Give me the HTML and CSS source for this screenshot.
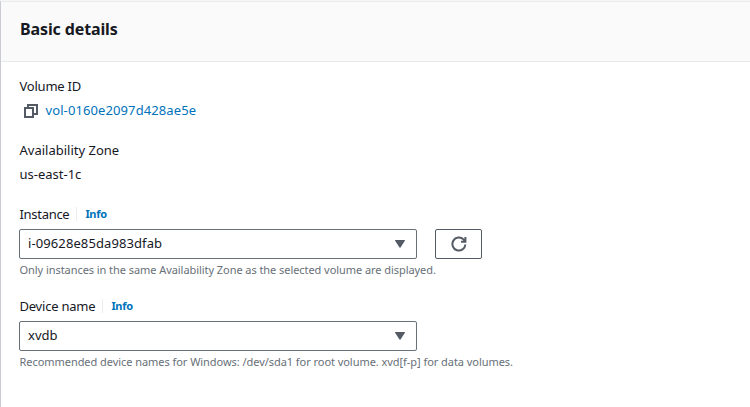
FILE: index.html
```html
<!DOCTYPE html>
<html lang="en">
<head>
<meta charset="utf-8">
<title>Attach volume</title>
<link rel="stylesheet" href="styles.css">
</head>
<body>
<section class="panel">
  <header class="panel-header"><h2>Basic details</h2></header>
  <div class="panel-body">
    <div class="field">
      <div class="label"><span class="t-volume">Volume ID</span></div>
      <div class="value">
        <svg class="copy" width="14" height="14" viewBox="0 0 14 14"><path d="M1 4h8v9H1zM4 4V1h9v9H9"/></svg>
        <a class="t-id">vol-0160e2097d428ae5e</a>
      </div>
    </div>
    <div class="field">
      <div class="label"><span>Availability Zone</span></div>
      <div class="value"><span>us-east-1c</span></div>
    </div>
    <div class="field field-instance">
      <div class="label"><span class="t-name">Instance</span><a class="info">Info</a></div>
      <div class="controls">
        <div class="select"><span class="t-id">i-09628e85da983dfab</span><svg width="10" height="8" viewBox="0 0 10 8"><path d="M.5 0h9q.7 0 .4.7L5.5 7.5q-.5.7-1 0L.1.7Q-.2 0 .5 0z"/></svg></div>
        <button class="refresh" aria-label="Refresh"><svg width="16" height="16" viewBox="0 0 16 16"><path d="M14.4 8.5A6.5 6.5 0 1 1 12.5 3.4L14.5 5.2M14.4 1v4.7H10"/></svg></button>
      </div>
      <div class="hint">Only instances in the same Availability Zone as the selected volume are displayed.</div>
    </div>
    <div class="field">
      <div class="label"><span class="t-device">Device name</span><a class="info">Info</a></div>
      <div class="controls"><div class="select"><span>xvdb</span><svg width="10" height="8" viewBox="0 0 10 8"><path d="M.5 0h9q.7 0 .4.7L5.5 7.5q-.5.7-1 0L.1.7Q-.2 0 .5 0z"/></svg></div></div>
      <div class="hint hint-device">Recommended device names for Windows: /dev/sda1 for root volume. xvd[f-p] for data volumes.</div>
    </div>
  </div>
</section>
</body>
</html>
```
FILE: styles.css
```css
* { box-sizing: border-box; }
body { margin: 0; padding-top: 1px; background: #f5f5f5; color: #16191f; font: 13px/20px "Noto Sans", "Open Sans", sans-serif; }
.panel { height: 406px; background: #fff; border-top: 1px solid #eaeded; border-left: 1px solid #c9cdd2; }
.panel-header { height: 60px; padding: 17px 18px 0 19px; background: #fafafa; border-bottom: 1px solid #e6eaea; }
h2 { margin: 0; font-size: 16px; line-height: 20px; font-weight: 700; letter-spacing: -0.12px; }
.panel-body { padding: 14px 18px; }
.field { height: 64px; }
.field-instance { height: 92px; }
.label { display: flex; align-items: center; height: 20px; padding-left: .5px; }
.value { display: flex; align-items: center; height: 20px; margin-top: 4px; padding-left: .5px; }
span, a, .hint { white-space: nowrap; }
a { color: #0073bb; }
.t-volume { letter-spacing: -0.22px; }
.t-id { letter-spacing: 0.1px; }
.t-name { letter-spacing: -0.3px; }
.t-device { letter-spacing: -0.22px; }
.copy { margin: 1px 7.5px 0 4.5px; fill: none; stroke: #545b64; stroke-width: 2; }
.info { margin-left: 7px; padding-left: 8px; border-left: 1px solid #eaeded; font-size: 11px; line-height: 14px; font-weight: 700; letter-spacing: -0.3px; }
.controls { display: flex; gap: 18px; margin-top: 5px; }
.select { display: flex; align-items: center; justify-content: space-between; width: 398px; height: 30px; padding: 0 11px 0 8px; border: 1px solid #687078; border-radius: 2px; }
.select span { margin-top: -2px; }
.select svg { fill: #545b64; }
.refresh { display: flex; align-items: center; justify-content: center; width: 47px; height: 30px; padding: 0; background: #fff; border: 1px solid #545b64; border-radius: 2px; }
.refresh svg { fill: none; stroke: #545b64; stroke-width: 2; }
.hint { margin-top: 2px; padding-left: .5px; color: #687078; font-size: 11px; line-height: 18px; letter-spacing: -0.058px; }
.hint-device { letter-spacing: -0.05px; }
```
